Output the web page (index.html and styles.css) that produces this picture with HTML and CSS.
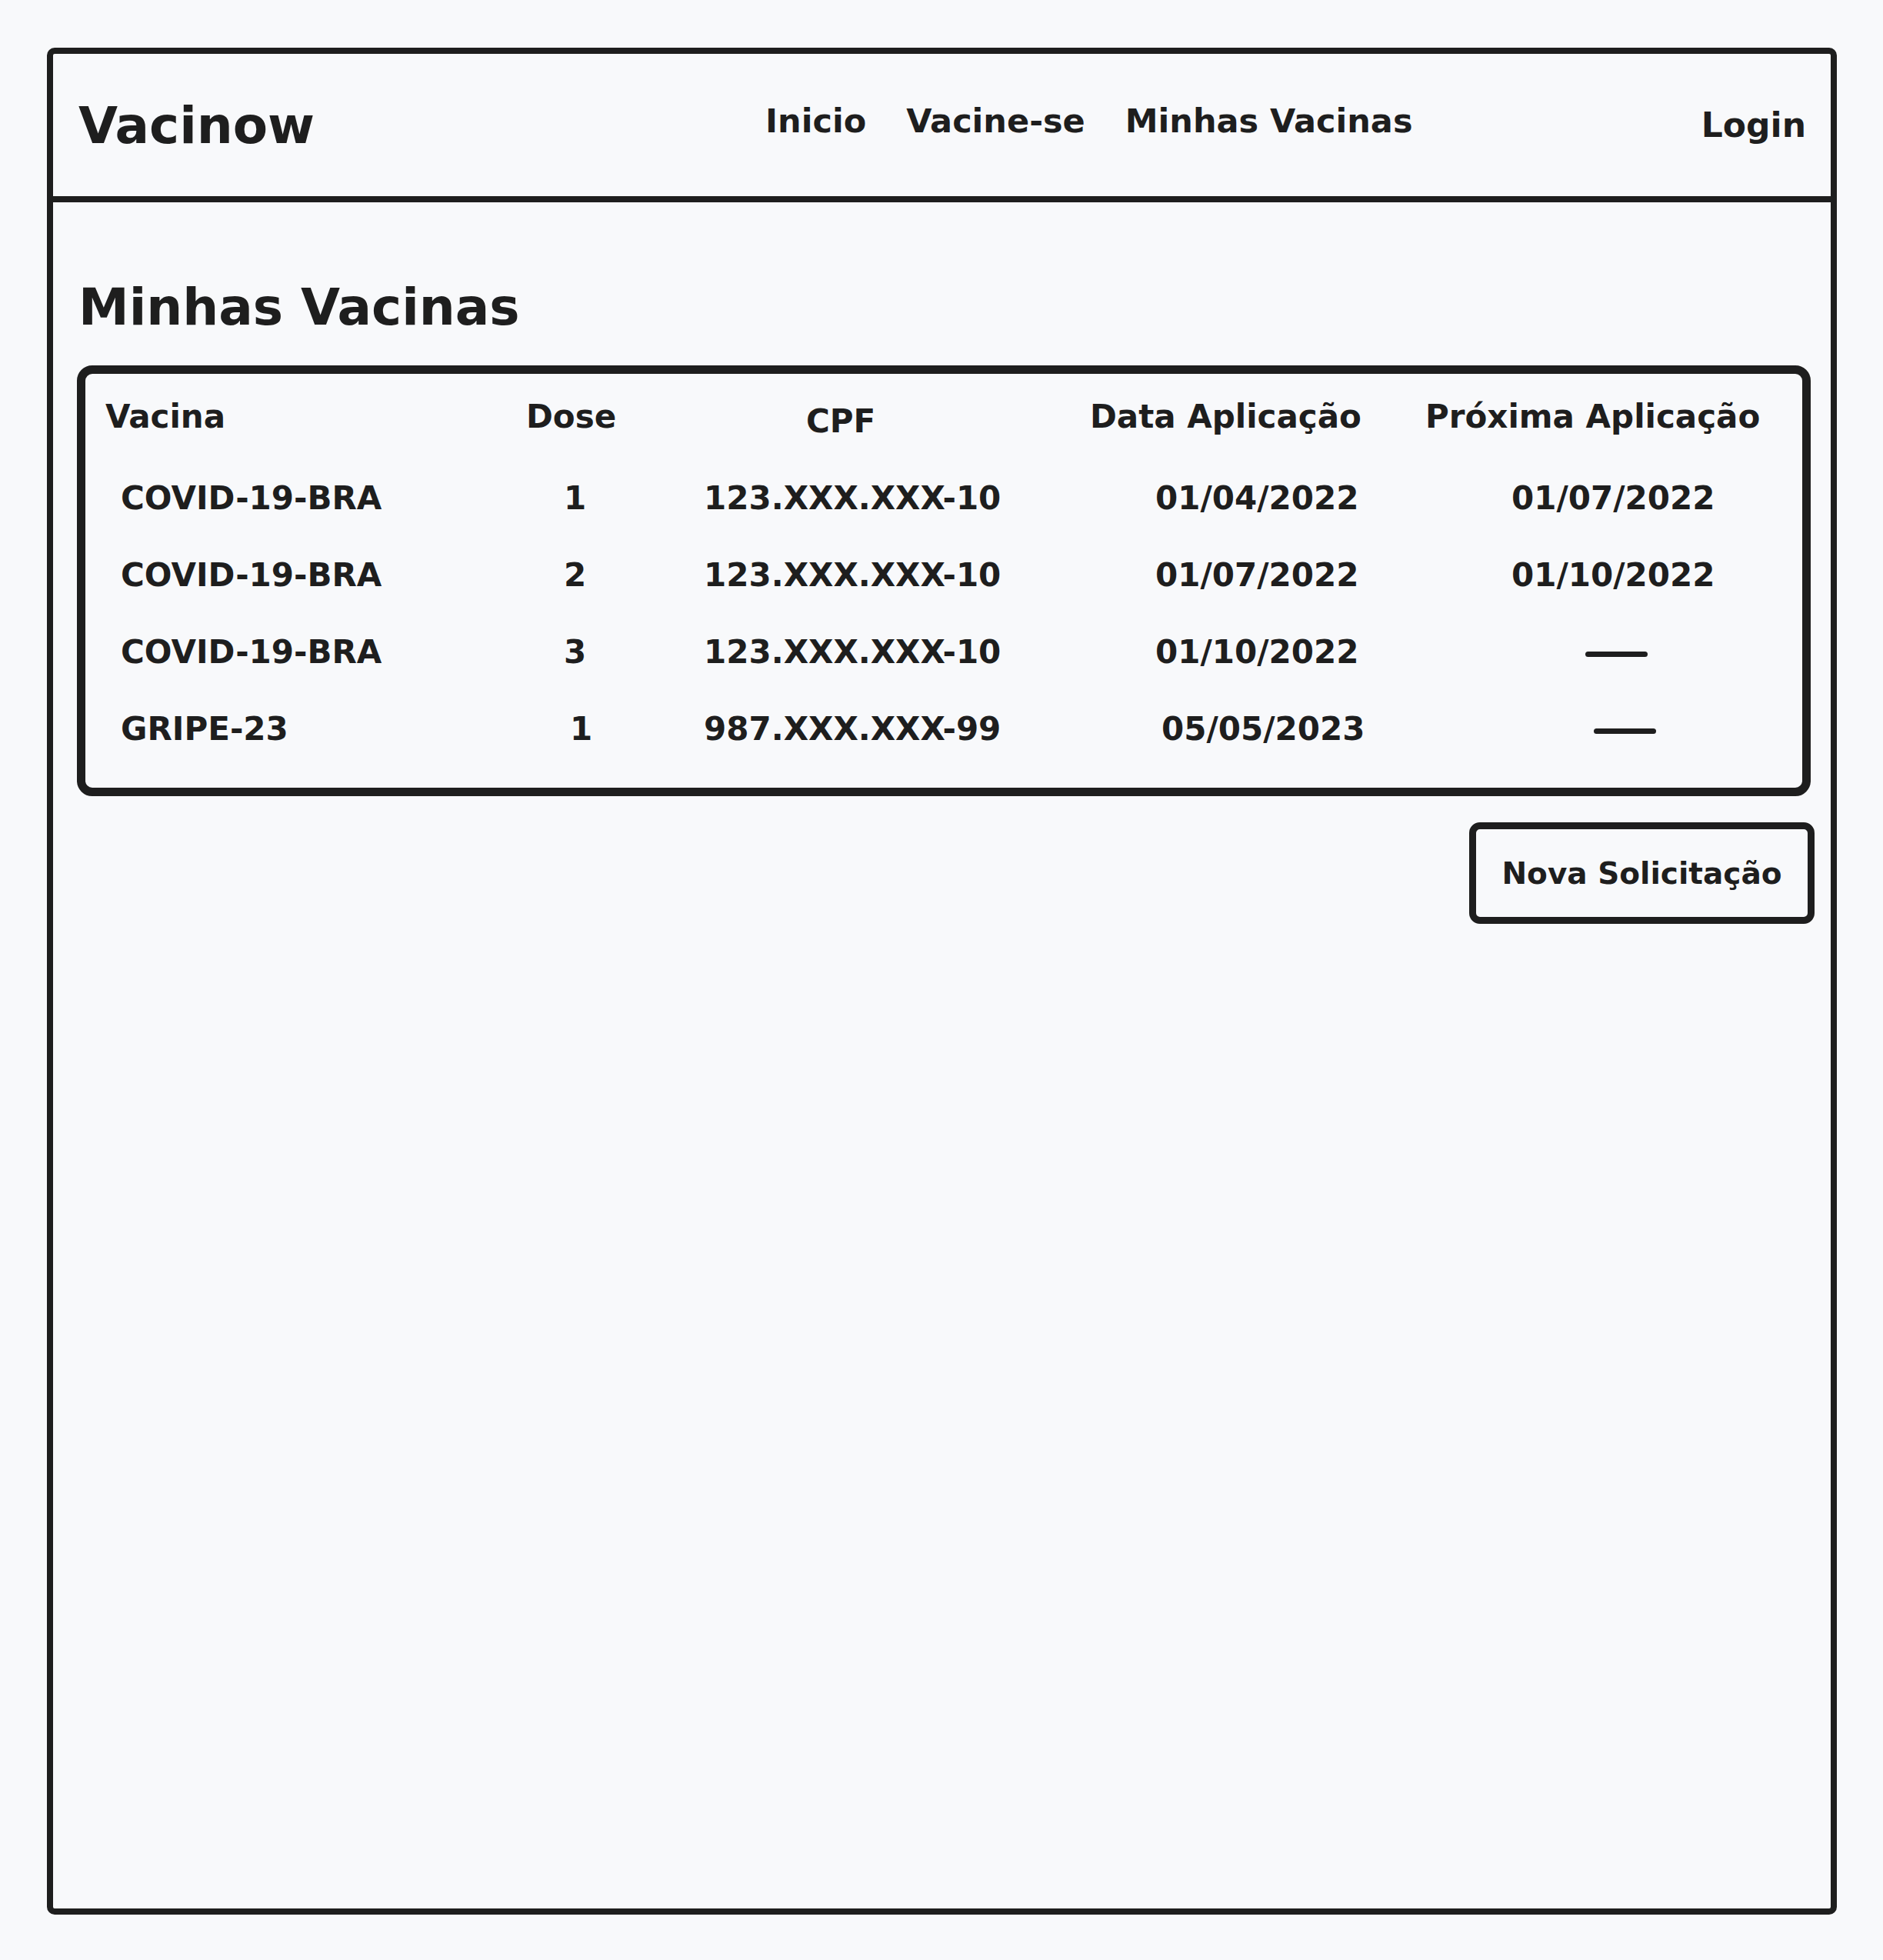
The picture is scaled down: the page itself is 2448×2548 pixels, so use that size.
FILE: index.html
```html
<!DOCTYPE html>
<html lang="pt-BR">
<head>
    <meta charset="UTF-8">
    <meta name="viewport" content="width=device-width, initial-scale=1.0">
    <title>Vacinow - Minhas Vacinas</title>
    <link rel="stylesheet" href="styles.css">
</head>
<body>

    <div class="frame">
        <header class="topbar">
            <div class="brand">Vacinow</div>
            <nav class="menu">
                <a href="#">Inicio</a>
                <a href="#">Vacine-se</a>
                <a href="#">Minhas Vacinas</a>
            </nav>
            <a class="login" href="#">Login</a>
        </header>

        <main class="content">
            <h1 class="page-title">Minhas Vacinas</h1>

            <section class="vaccines">
                <div class="table-head">
                    <span>Vacina</span>
                    <span>Dose</span>
                    <span class="low">CPF</span>
                    <span>Data Aplicação</span>
                    <span>Próxima Aplicação</span>
                </div>

                <div class="table-row">
                    <span>COVID-19-BRA</span>
                    <span>1</span>
                    <span>123.XXX.XXX-10</span>
                    <span>01/04/2022</span>
                    <span>01/07/2022</span>
                </div>
                <div class="table-row">
                    <span>COVID-19-BRA</span>
                    <span>2</span>
                    <span>123.XXX.XXX-10</span>
                    <span>01/07/2022</span>
                    <span>01/10/2022</span>
                </div>
                <div class="table-row">
                    <span>COVID-19-BRA</span>
                    <span>3</span>
                    <span>123.XXX.XXX-10</span>
                    <span>01/10/2022</span>
                    <span><i class="none"></i></span>
                </div>
                <div class="table-row">
                    <span>GRIPE-23</span>
                    <span class="nudge">1</span>
                    <span>987.XXX.XXX-99</span>
                    <span class="nudge">05/05/2023</span>
                    <span><i class="none nudge"></i></span>
                </div>
            </section>

            <div class="actions">
                <button class="btn-new">Nova Solicitação</button>
            </div>
        </main>
    </div>

</body>
</html>
```

FILE: styles.css
```css
:root {
    --ink: #1e1e1e;
    --paper: #f8f9fb;
}

* {
    margin: 0;
    padding: 0;
    box-sizing: border-box;
}

body {
    font-family: 'DejaVu Sans', 'Liberation Sans', sans-serif;
    font-weight: bold;
    color: var(--ink);
    background-color: var(--paper);
    padding: 62px 0 0 61px;
}

a {
    color: var(--ink);
    text-decoration: none;
}

/* Marco principal */
.frame {
    width: 2327px;
    height: 2427px;
    border: 8px solid var(--ink);
    border-radius: 10px;
}

/* Cabecera */
.topbar {
    display: flex;
    align-items: flex-start;
    height: 193px;
    padding: 0 32px 0 33px;
    border-bottom: 8px solid var(--ink);
    line-height: 1;
}

.brand {
    font-size: 66px;
    margin-top: 61px;
}

.menu {
    display: flex;
    gap: 52px;
    margin-top: 66px;
    margin-left: 586px;
    font-size: 43px;
}

.login {
    font-size: 44px;
    margin-top: 71px;
    margin-left: auto;
}

/* Contenido */
.content {
    padding: 104px 26px 0 31px;
}

.page-title {
    font-size: 66px;
    line-height: 1;
    padding-left: 2px;
    margin-bottom: 42px;
}

.vaccines {
    border: 11px solid var(--ink);
    border-radius: 20px;
    padding: 6px 0 26px;
    font-size: 42px;
}

.table-head,
.table-row {
    display: grid;
    align-items: start;
    line-height: 100px;
    white-space: nowrap;
}

.table-head {
    grid-template-columns: 547px 364px 369px 436px 1fr;
    padding-left: 26px;
}

.table-head .low {
    padding-top: 6px;
}

.table-row {
    grid-template-columns: 576px 182px 587px 463px 1fr;
    padding-left: 46px;
}

.table-row .nudge {
    margin-left: 8px;
}

/* Guion de "sin fecha" */
.none {
    display: inline-block;
    width: 81px;
    height: 7px;
    margin-left: 96px;
    border-radius: 4px;
    background: var(--ink);
    vertical-align: middle;
}

.table-row .none.nudge {
    margin-left: 107px;
}

.actions {
    display: flex;
    justify-content: flex-end;
    margin-top: 34px;
    margin-right: -5px;
}

.btn-new {
    width: 449px;
    height: 132px;
    border: 9px solid var(--ink);
    border-radius: 14px;
    background: transparent;
    color: var(--ink);
    font-family: inherit;
    font-weight: bold;
    font-size: 39px;
    cursor: pointer;
}
```
